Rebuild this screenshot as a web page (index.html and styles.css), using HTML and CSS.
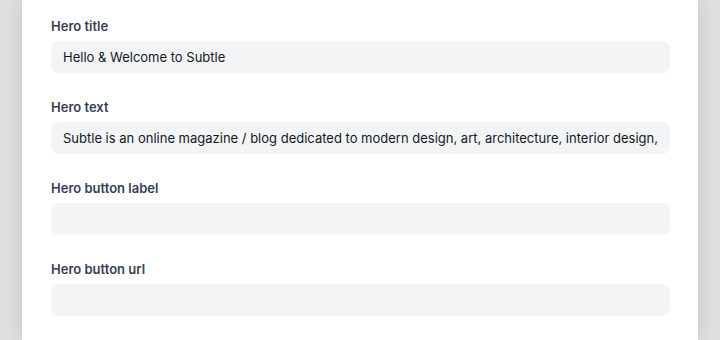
FILE: index.html
```html
<!DOCTYPE html>
<html>
<head>
<meta charset="utf-8">
<link rel="stylesheet" href="styles.css">
</head>
<body>
<div class="page">
  <div class="card">
    <div class="field">
      <label class="label">Hero title</label>
      <input class="input" type="text" value="Hello &amp; Welcome to Subtle">
    </div>
    <div class="field">
      <label class="label">Hero text</label>
      <input class="input" type="text" value="Subtle is an online magazine / blog dedicated to modern design, art, architecture, interior design, and lifestyle.">
    </div>
    <div class="field">
      <label class="label">Hero button label</label>
      <input class="input" type="text" value="">
    </div>
    <div class="field">
      <label class="label">Hero button url</label>
      <input class="input" type="text" value="">
    </div>
  </div>
</div>
</body>
</html>
```
FILE: styles.css
```css
html, body {
  margin: 0;
  padding: 0;
  height: 100%;
  overflow: hidden;
}
body {
  background: #dfe0e2;
  font-family: Inter, "Liberation Sans", sans-serif;
}
.page {
  padding: 0 22px;
  height: 100%;
}
.card {
  background: #ffffff;
  height: 100%;
  box-sizing: border-box;
  padding: 16px 28px 0 29px;
  display: flex;
  flex-direction: column;
  gap: 24px;
  box-shadow: 0 0 22px rgba(0, 0, 0, 0.13);
}
.field {
  display: flex;
  flex-direction: column;
}
.label {
  font-size: 13px;
  line-height: 20px;
  font-weight: 600;
  color: #374151;
  margin-bottom: 5px;
}
.input {
  height: 32px;
  box-sizing: border-box;
  border: none;
  outline: none;
  border-radius: 8px;
  background: #f3f4f6;
  padding: 0 12px;
  font-family: Inter, "Liberation Sans", sans-serif;
  font-size: 13px;
  color: #111827;
  width: 100%;
}
```
